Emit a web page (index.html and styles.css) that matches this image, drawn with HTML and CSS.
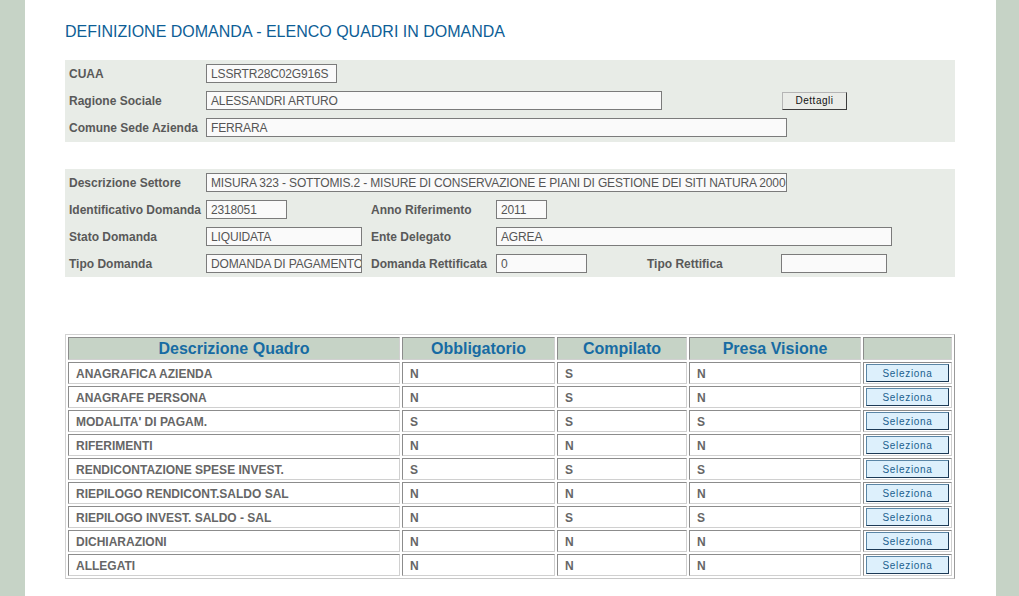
FILE: index.html
```html
<!DOCTYPE html>
<html lang="it">
<head>
    <meta charset="UTF-8">
    <title>Definizione Domanda - Elenco Quadri</title>
    <link rel="stylesheet" href="styles.css">
</head>
<body>
    <div class="side side-left"></div>
    <div class="main">
        <h1 class="title">DEFINIZIONE DOMANDA - ELENCO QUADRI IN DOMANDA</h1>

        <!-- dati azienda -->
        <div class="panel">
            <span class="label row-start">CUAA</span>
            <span class="field w-131">LSSRTR28C02G916S</span>

            <span class="label row-start">Ragione Sociale</span>
            <span class="field w-456 span-4">ALESSANDRI ARTURO</span>
            <button class="btn-dettagli">Dettagli</button>

            <span class="label row-start">Comune Sede Azienda</span>
            <span class="field w-581 span-5">FERRARA</span>
        </div>

        <!-- dati domanda -->
        <div class="panel panel-domanda">
            <span class="label row-start">Descrizione Settore</span>
            <span class="field w-581 span-5">MISURA 323 - SOTTOMIS.2 - MISURE DI CONSERVAZIONE E PIANI DI GESTIONE DEI SITI NATURA 2000</span>

            <span class="label row-start">Identificativo Domanda</span>
            <span class="field w-81">2318051</span>
            <span class="label">Anno Riferimento</span>
            <span class="field w-51 span-3">2011</span>

            <span class="label row-start">Stato Domanda</span>
            <span class="field w-156">LIQUIDATA</span>
            <span class="label">Ente Delegato</span>
            <span class="field w-396 span-3">AGREA</span>

            <span class="label row-start">Tipo Domanda</span>
            <span class="field w-156">DOMANDA DI PAGAMENTO</span>
            <span class="label">Domanda Rettificata</span>
            <span class="field w-91">0</span>
            <span class="label">Tipo Rettifica</span>
            <span class="field w-106"></span>
        </div>

        <table class="quadri">
            <colgroup>
                <col style="width: 332px">
                <col style="width: 153px">
                <col style="width: 130px">
                <col style="width: 172px">
                <col style="width: 89px">
            </colgroup>
            <thead>
                <tr>
                    <th>Descrizione Quadro</th>
                    <th>Obbligatorio</th>
                    <th>Compilato</th>
                    <th>Presa Visione</th>
                    <th></th>
                </tr>
            </thead>
            <tbody id="righe"></tbody>
        </table>
    </div>
    <div class="side side-right"></div>

    <script>
        // elenco quadri: descrizione, obbligatorio, compilato, presa visione
        const quadri = [
            ['ANAGRAFICA AZIENDA', 'N', 'S', 'N'],
            ['ANAGRAFE PERSONA', 'N', 'S', 'N'],
            ["MODALITA' DI PAGAM.", 'S', 'S', 'S'],
            ['RIFERIMENTI', 'N', 'N', 'N'],
            ['RENDICONTAZIONE SPESE INVEST.', 'S', 'S', 'S'],
            ['RIEPILOGO RENDICONT.SALDO SAL', 'N', 'N', 'N'],
            ['RIEPILOGO INVEST. SALDO - SAL', 'N', 'S', 'S'],
            ['DICHIARAZIONI', 'N', 'N', 'N'],
            ['ALLEGATI', 'N', 'N', 'N']
        ];

        const tbody = document.getElementById('righe');
        quadri.forEach(function (q) {
            const tr = document.createElement('tr');
            q.forEach(function (v) {
                const td = document.createElement('td');
                td.textContent = v;
                tr.appendChild(td);
            });
            const tdBtn = document.createElement('td');
            tdBtn.className = 'cell-btn';
            tdBtn.innerHTML = '<button class="btn-seleziona">Seleziona</button>';
            tr.appendChild(tdBtn);
            tbody.appendChild(tr);
        });
    </script>
</body>
</html>
```

FILE: styles.css
```css
body {
    margin: 0;
    display: flex;
    min-height: 596px;
    background-color: #ffffff;
    font-family: "Liberation Sans", Arial, sans-serif;
}

.side {
    background-color: #c6d3c6;
}

.side-left {
    width: 25px;
}

.side-right {
    width: 23px;
}

.main {
    flex: 1;
    padding-left: 40px;
}

.title {
    margin: 23px 0 19px 0;
    font-size: 16px;
    font-weight: normal;
    line-height: 18px;
    color: #0d5e96;
}

/* pannelli dati */
.panel {
    width: 886px;
    background-color: #e8ece7;
    padding: 4px 0 5px 4px;
    margin-bottom: 27px;
    display: grid;
    grid-template-columns: 137px 165px 125px 151px 134px auto;
    grid-auto-rows: 19px;
    row-gap: 8px;
    align-items: center;
}

.panel-domanda {
    padding-bottom: 4px;
    margin-bottom: 57px;
}

.label {
    font-size: 12px;
    font-weight: bold;
    color: #595959;
    white-space: nowrap;
}

.row-start {
    grid-column-start: 1;
}

.field {
    box-sizing: border-box;
    height: 19px;
    border: 1px solid #7b7b7b;
    background-color: #fafafa;
    padding: 2px 0 0 4px;
    font-size: 12px;
    line-height: 14px;
    letter-spacing: -0.15px;
    color: #555;
    white-space: nowrap;
    overflow: hidden;
}

.span-3 { grid-column: span 3; }
.span-4 { grid-column: span 4; }
.span-5 { grid-column: span 5; }

.w-51 { width: 51px; }
.w-81 { width: 81px; }
.w-91 { width: 91px; }
.w-106 { width: 106px; }
.w-131 { width: 131px; }
.w-156 { width: 156px; }
.w-396 { width: 396px; }
.w-456 { width: 456px; }
.w-581 { width: 581px; }

.btn-dettagli {
    width: 65px;
    height: 18px;
    margin-left: 1px;
    padding: 0;
    background-color: #eaece8;
    border: 1px solid;
    border-color: #b5b5b5 #3c3c3c #3c3c3c #b5b5b5;
    font-family: "Liberation Sans", Arial, sans-serif;
    font-size: 10px;
    letter-spacing: 0.5px;
    color: #111;
}

/* tabella quadri */
.quadri {
    width: 890px;
    table-layout: fixed;
    border-collapse: separate;
    border-spacing: 2px;
    border: 1px solid;
    border-color: #d2d2d2 #9a9a9a #c8c8c8 #d2d2d2;
}

.quadri th,
.quadri td {
    box-sizing: border-box;
    border: 1px solid;
    border-color: #8c8c8c #d0d0d0 #d0d0d0 #8c8c8c;
}

.quadri th {
    height: 23px;
    padding: 0;
    background-color: #c6d3c6;
    font-size: 16px;
    font-weight: bold;
    color: #176ba3;
    text-align: center;
}

.quadri td {
    height: 22px;
    padding: 1px 0 0 7px;
    font-size: 12px;
    font-weight: bold;
    color: #666;
    white-space: nowrap;
}

.quadri td.cell-btn {
    padding: 0;
    text-align: center;
}

.btn-seleziona {
    display: block;
    margin: 0 auto;
    width: 83px;
    height: 18px;
    padding: 0;
    background-color: #ddf0fc;
    border: 1px solid;
    border-color: #5a86a6 #1c3a56 #1c3a56 #5a86a6;
    font-family: "Liberation Sans", Arial, sans-serif;
    font-size: 10px;
    letter-spacing: 0.7px;
    color: #1b5f8e;
}
```
